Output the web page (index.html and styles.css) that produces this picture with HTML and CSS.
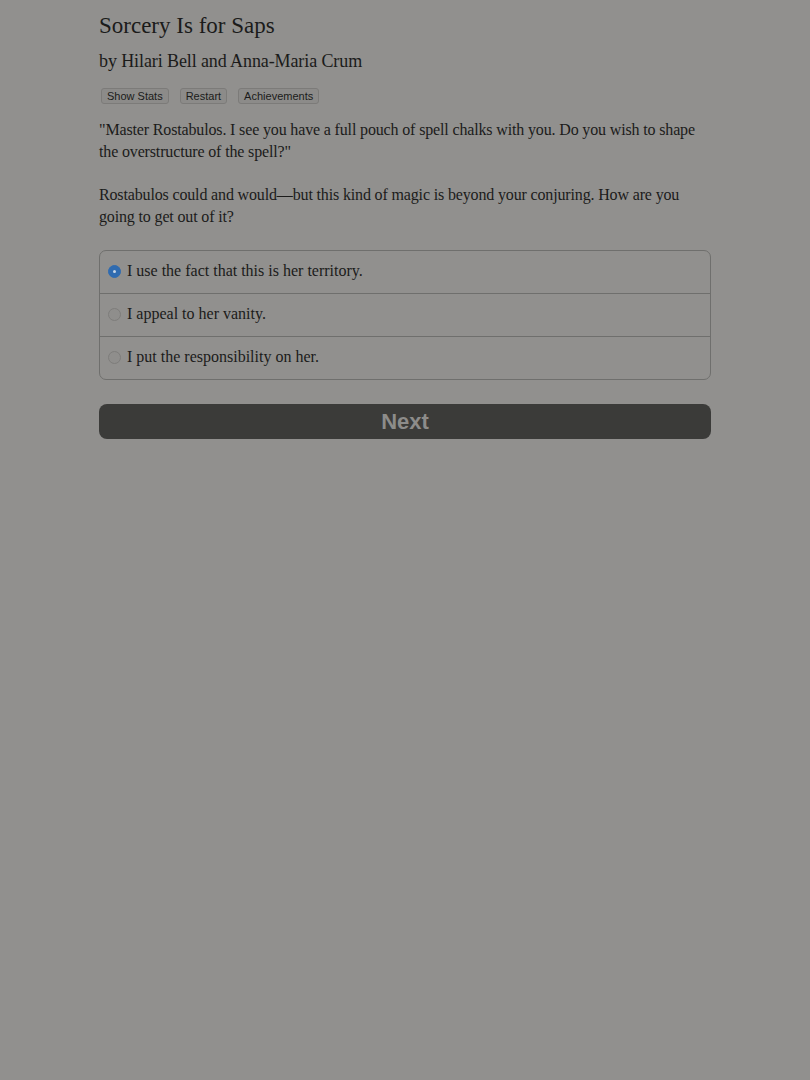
FILE: index.html
```html
<!DOCTYPE html>
<html>
<head>
<meta charset="utf-8">
<link rel="stylesheet" href="styles.css">
</head>
<body>
<div class="page">
  <h1 class="title">Sorcery Is for Saps</h1>
  <h2 class="author">by Hilari Bell and Anna-Maria Crum</h2>
  <div class="toolbar">
    <button class="tool">Show Stats</button>
    <button class="tool">Restart</button>
    <button class="tool">Achievements</button>
  </div>
  <p class="text">"Master Rostabulos. I see you have a full pouch of spell chalks with you. Do you wish to shape the overstructure of the spell?"</p>
  <p class="text">Rostabulos could and would—but this kind of magic is beyond your conjuring. How are you going to get out of it?</p>
  <div class="choices">
    <label class="choice"><span class="radio on"></span><span>I use the fact that this is her territory.</span></label>
    <label class="choice"><span class="radio"></span><span>I appeal to her vanity.</span></label>
    <label class="choice"><span class="radio"></span><span>I put the responsibility on her.</span></label>
  </div>
  <button class="next">Next</button>
</div>
</body>
</html>
```
FILE: styles.css
```css
html, body {
  margin: 0;
  padding: 0;
  background: #91908e;
  height: 100%;
}
body {
  font-family: "Liberation Serif", serif;
  color: #1b1b1a;
}
.page {
  width: 612px;
  margin: 0 auto;
  padding-top: 12px;
}
.title {
  font-size: 23px;
  font-weight: normal;
  margin: 0;
  line-height: 28px;
}
.author {
  font-size: 18px;
  letter-spacing: -0.1px;
  font-weight: normal;
  margin: 0;
  margin-top: 9px;
  line-height: 24px;
}
.toolbar {
  display: flex;
  gap: 11px;
  margin-top: 15px;
  padding-left: 2px;
}
.tool {
  font-family: "Liberation Sans", sans-serif;
  font-size: 11px;
  color: #1b1b1a;
  background: #8c8b89;
  border: 1px solid #7c7b79;
  border-radius: 3px;
  padding: 0 5px;
  height: 16px;
  line-height: 14px;
}
.text {
  font-size: 16px;
  letter-spacing: -0.15px;
  line-height: 22px;
  margin: 15px 0 21px;
}
.text + .text {
  margin-top: 0;
}
.choices {
  margin-top: 22px;
  border: 1px solid #6f6f6d;
  border-radius: 7px;
  display: flex;
  flex-direction: column;
}
.choice {
  display: flex;
  align-items: center;
  gap: 6px;
  height: 42px;
  box-sizing: border-box;
  padding: 0 0 3px 8px;
  font-size: 16px;
  border-top: 1px solid #6f6f6d;
}
.choice:first-child {
  border-top: none;
  height: 42px;
}
.choice + .choice {
  height: 43px;
}
.radio {
  width: 13px;
  height: 13px;
  border-radius: 50%;
  border: 1px solid #7e7d7b;
  background: #8f8e8c;
  box-sizing: border-box;
  flex: none;
  position: relative;
  margin-top: 2px;
}
.radio.on {
  background: #2f6bb0;
  border-color: #2f6bb0;
}
.radio.on::after {
  content: "";
  position: absolute;
  left: 4px;
  top: 4px;
  width: 3px;
  height: 3px;
  border-radius: 50%;
  background: #c9d6e6;
}
.next {
  display: block;
  width: 612px;
  height: 35px;
  margin-top: 24px;
  background: #3b3b39;
  color: #8d8c8a;
  border: none;
  border-radius: 8px;
  font-family: "Liberation Sans", sans-serif;
  font-weight: bold;
  font-size: 22px;
}
```
